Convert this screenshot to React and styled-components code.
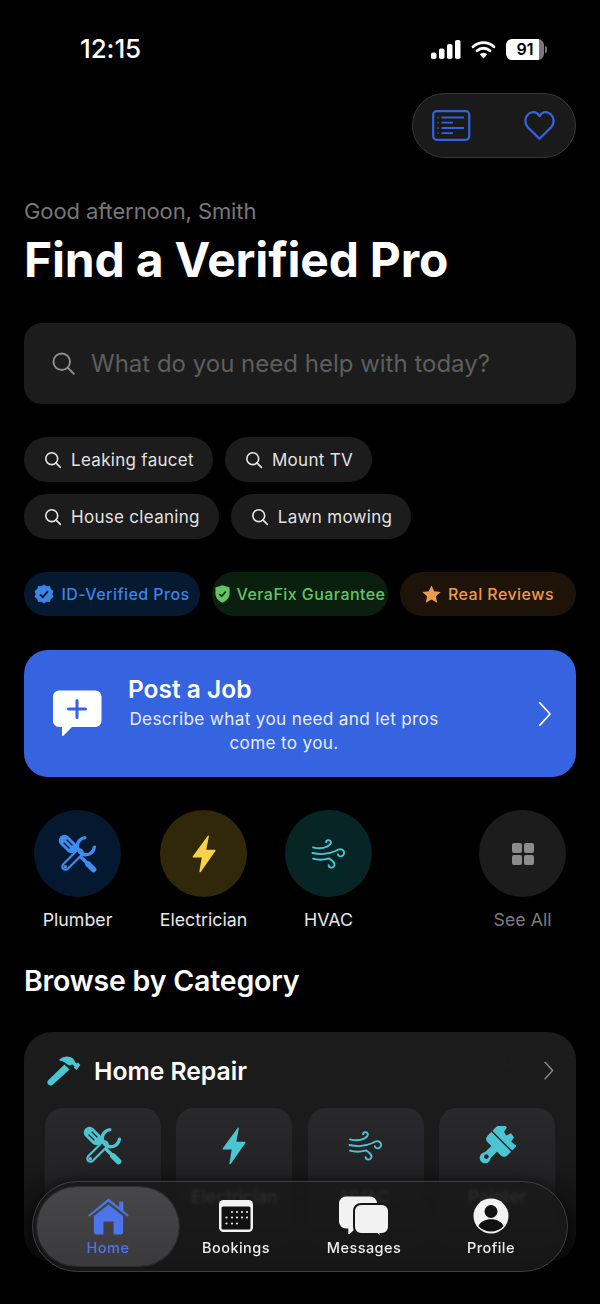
import React from "react";
import styled, { createGlobalStyle } from "styled-components";

const Global = createGlobalStyle`
  html, body { margin: 0; padding: 0; background: #000; }
  body { font-family: Inter, "Liberation Sans", sans-serif; color: #fff; }
  * { box-sizing: border-box; }
`;

const Page = styled.div`
  position: relative;
  width: 600px;
  height: 1304px;
  overflow: hidden;
  background: #000;
  padding: 0 24px;
`;

const StatusBar = styled.div`
  height: 93px;
  padding: 34px 29px 0 56px;
  display: flex;
  justify-content: space-between;
  align-items: flex-start;
`;
const Time = styled.div`
  font-size: 26px;
  line-height: 30px;
  font-weight: 500;
  letter-spacing: -0.1px;
`;
const StatusIcons = styled.div`
  display: flex;
  align-items: center;
  gap: 10px;
  height: 30px;
`;
const BatteryWrap = styled.div`
  display: flex;
  align-items: center;
  gap: 1px;
`;
const Battery = styled.div`
  width: 38px;
  height: 21px;
  border-radius: 6px;
  background: linear-gradient(90deg, #fff 88%, #777 88%);
  color: #000;
  font-size: 16px;
  font-weight: 600;
  display: flex;
  align-items: center;
  justify-content: center;
`;
const BatteryCap = styled.div`
  width: 2px;
  height: 7px;
  border-radius: 0 2px 2px 0;
  background: #777;
`;

const ActionRow = styled.div`
  display: flex;
  justify-content: flex-end;
`;
const ActionPill = styled.div`
  width: 164px;
  height: 65px;
  border-radius: 33px;
  background: #1a1a1a;
  border: 1px solid #383838;
  display: flex;
  align-items: center;
  justify-content: space-between;
  padding: 0 20px 0 19px;
`;

const Greeting = styled.div`
  margin-top: 40px;
  font-size: 22px;
  line-height: 26px;
  color: #777;
  letter-spacing: -0.1px;
`;
const Title = styled.h1`
  margin: 7px 0 0;
  font-size: 48px;
  line-height: 58px;
  font-weight: 700;
  letter-spacing: -0.2px;
`;

const SearchBar = styled.div`
  margin-top: 34px;
  height: 81px;
  border-radius: 18px;
  background: #1c1c1d;
  display: flex;
  align-items: center;
  padding: 0 27px;
  gap: 15px;
`;
const Placeholder = styled.span`
  font-size: 24px;
  color: #5e5e5e;
`;

const Chips = styled.div`
  margin-top: 33px;
  display: flex;
  flex-wrap: wrap;
  gap: 12px;
  width: 440px;
`;
const Chip = styled.div`
  height: 45px;
  border-radius: 23px;
  background: #1c1c1d;
  display: flex;
  align-items: center;
  gap: 9px;
  padding: 0 19px 0 20px;
  font-size: 17px;
  letter-spacing: 0.3px;
  color: #e2e2e2;
`;

const Badges = styled.div`
  margin-top: 33px;
  display: flex;
  justify-content: space-between;
`;
const Badge = styled.div`
  width: 176px;
  height: 44px;
  border-radius: 22px;
  background: ${(p) => p.$bg};
  color: ${(p) => p.$fg};
  display: flex;
  align-items: center;
  justify-content: center;
  gap: 7px;
  font-size: 16px;
  font-weight: 500;
  letter-spacing: 0.45px;
  white-space: nowrap;
`;

const PostCard = styled.div`
  margin-top: 34px;
  height: 127px;
  border-radius: 24px;
  background: #3663e0;
  display: flex;
  align-items: center;
  padding: 0 24px 0 28px;
`;
const PostBody = styled.div`
  width: 312px;
  margin-left: 26px;
`;
const PostTitle = styled.div`
  font-size: 24.5px;
  line-height: 32px;
  font-weight: 600;
`;
const PostText = styled.div`
  margin-top: 2px;
  font-size: 17.2px;
  line-height: 24px;
  letter-spacing: 0.32px;
  color: #e6ecfc;
  text-align: center;
`;
const PostArrow = styled.div`
  margin-left: auto;
  display: flex;
`;

const Quick = styled.div`
  margin-top: 33px;
  display: grid;
  grid-template-columns: 126px 125px 1fr 87px;
  padding: 0 10px;
`;
const QuickItem = styled.div`
  width: 87px;
  display: flex;
  flex-direction: column;
  align-items: center;
`;
const QuickCircle = styled.div`
  width: 87px;
  height: 87px;
  border-radius: 50%;
  background: ${(p) => p.$bg};
  display: flex;
  align-items: center;
  justify-content: center;
`;
const QuickLabel = styled.div`
  margin-top: 12px;
  font-size: 17.8px;
  line-height: 21px;
  white-space: nowrap;
  color: ${(p) => (p.$muted ? "#7b7b7b" : "#e8e8e8")};
`;

const SectionTitle = styled.h2`
  margin: 33px 0 0;
  font-size: 28.5px;
  line-height: 36px;
  font-weight: 600;
  letter-spacing: -0.2px;
`;

const CategoryCard = styled.div`
  margin-top: 33px;
  height: 230px;
  border-radius: 28px;
  background: linear-gradient(180deg, #1c1c1d 0%, #1a1a1b 55%, #0a0a0a 100%);
  padding: 0 21px;
`;
const CategoryHeader = styled.div`
  height: 76px;
  display: flex;
  align-items: center;
  gap: 13px;
  padding: 1px 1px 0 2px;
`;
const CategoryName = styled.div`
  font-size: 24.7px;
  font-weight: 600;
  flex: 1;
`;
const TileGrid = styled.div`
  display: grid;
  grid-template-columns: repeat(4, 116px);
  justify-content: space-between;
`;
const Tile = styled.div`
  height: 140px;
  border-radius: 18px;
  background: linear-gradient(180deg, #29292b 0%, #222224 50%, #0e0e0e 100%);
  display: flex;
  flex-direction: column;
  align-items: center;
  padding-top: 18px;
`;
const TileIcon = styled.div`
  height: 40px;
  display: flex;
  align-items: center;
  justify-content: center;
`;
const TileLabel = styled.div`
  margin-top: 20px;
  font-size: 17.5px;
  line-height: 21px;
  color: #a8a8a8;
`;

const TabBar = styled.nav`
  position: absolute;
  left: 32px;
  top: 1181px;
  width: 536px;
  height: 91px;
  border-radius: 46px;
  background: rgba(26, 26, 27, 0.86);
  backdrop-filter: blur(1.5px);
  border: 1px solid #3e3e3e;
  box-shadow: 0 0 14px rgba(0, 0, 0, 0.6);
  display: grid;
  grid-template-columns: 142px 114px 142px 112px;
  align-items: center;
  padding: 5px 0 5px 4px;
`;
const Tab = styled.div`
  height: 79px;
  border-radius: 40px;
  display: flex;
  flex-direction: column;
  align-items: center;
  justify-content: flex-end;
  padding-bottom: 9px;
  font-size: 14.5px;
  line-height: 18px;
  font-weight: 500;
  letter-spacing: 0.45px;
  color: ${(p) => (p.$active ? "#4d75ea" : "#efefef")};
  background: ${(p) => (p.$active ? "linear-gradient(180deg,#474749 0%,#3a3a3c 100%)" : "transparent")};
  box-shadow: ${(p) => (p.$active ? "0 0 0 1px #2c2c2c" : "none")};
`;
const TabIcon = styled.div`
  height: 42px;
  display: flex;
  align-items: center;
  justify-content: center;
  margin-bottom: 2px;
`;

const Search = ({ size = 20, color = "#e6e6e6", sw = 1.8 }) => (
  <svg width={size} height={size} viewBox="0 0 20 20" fill="none" stroke={color} strokeWidth={sw} strokeLinecap="round">
    <circle cx="8.6" cy="8.6" r="6.6" />
    <path d="M13.5 13.5 18.2 18.2" />
  </svg>
);

const Tools = ({ color, bg }) => (
  <svg width="40" height="40" viewBox="0 0 40 40" fill="none">
    <path d="M6.5 6.5 13.5 13.5" stroke={color} strokeWidth="11.5" strokeLinecap="round" />
    <path d="M6 9 11 14M9 6 14 11" stroke={bg} strokeWidth="1.4" strokeLinecap="round" />
    <path d="M15 15 31 31" stroke={color} strokeWidth="3.6" />
    <path d="M30 30 35.5 35.5" stroke={color} strokeWidth="5.8" strokeLinecap="round" />
    <path d="M21.5 18.5 7.5 32.5" stroke={color} strokeWidth="8.6" strokeLinecap="round" />
    <path d="M21.5 18.5 7.5 32.5" stroke={bg} strokeWidth="4.4" strokeLinecap="round" />
    <path d="M26.8 3.6 A8.6 8.6 0 1 0 36.4 13.2" stroke={color} strokeWidth="3.4" strokeLinecap="round" />
    <circle cx="7.3" cy="32.7" r="1.7" fill={color} />
  </svg>
);

const Bolt = ({ color, w = 24, h = 38 }) => (
  <svg width={w} height={h} viewBox="0 0 24 38">
    <path d="M15.8.8.8 21.2c-.4.6 0 1.3.7 1.3h8.2L7.4 36.4c-.1.8.8 1.2 1.3.6L23.4 16c.4-.6 0-1.3-.7-1.3h-8.4L16.9 1.3c.1-.7-.7-1-1.1-.5Z" fill={color} />
  </svg>
);

const Wind = ({ color, w = 35, h = 30 }) => (
  <svg width={w} height={h} viewBox="0 0 34 30" fill="none" stroke={color} strokeWidth="1.9" strokeLinecap="round">
    <path d="M1.5 8.4C6 9.6 11 9.8 15.6 7.6C18 6.4 19.4 5.2 19.4 3.6C19.4 2 18 1 16.6 1.2C15.4 1.4 14.6 2.2 14.6 3.2" />
    <path d="M1 14C8 15.6 17 15.4 24 12C25.6 11 27 10 29 10.2C31 10.4 32.8 12 32.6 14.2C32.4 16.4 30.2 17.8 28.2 17.2C27 16.8 26.4 16 26.4 15.2" />
    <path d="M1.5 19.6C6 21 12 21 17.6 19.4C20 21.2 22.6 22.6 23 25C23.3 27.2 21.6 28.8 19.6 28.6C18.2 28.4 17.2 27.4 17.2 26.2" />
  </svg>
);

const Grid4 = () => (
  <svg width="24" height="24" viewBox="0 0 24 24" fill="#8c8c8c">
    <rect x="1" y="1" width="10" height="10" rx="2" />
    <rect x="13" y="1" width="10" height="10" rx="2" />
    <rect x="1" y="13" width="10" height="10" rx="2" />
    <rect x="13" y="13" width="10" height="10" rx="2" />
  </svg>
);

const Brush = ({ color, bg }) => (
  <svg width="38" height="40" viewBox="0 0 38 40" fill="none">
    <g transform="rotate(45 19 20) translate(0 -1)">
      <path d="M5 13.5 V3 Q5 1 7 1 H13 L14 6 L18 7 L20 2 L25 3 L26 8 L33 7 V13.5 Z" fill={color} />
      <path d="M5 15 H33 V20 Q33 25 28 25 H23 V34 A5.5 5.5 0 1 1 15 34 V25 H10 Q5 25 5 20 Z" fill={color} />
      <circle cx="19" cy="36" r="2.3" fill={bg} />
    </g>
  </svg>
);

const Hammer = ({ color }) => (
  <svg width="34" height="30" viewBox="0 0 34 30" fill="none">
    <path d="M12.4 3.6Q17-.6 23 1Q27 2.2 28 6L29.6 7.6L31 6.4L33.4 9L29.4 14L26.8 11.6L27.6 10.4L25.4 8.6L22.6 9.600L20.4 8.6Q17.6 5.2 12.4 4.4Z" fill={color} />
    <path d="M17.4 8.4 22.6 13.400 5.400 29Q3 30.400 1.200 28.600Q-.4 26.600 1 24.400Z" fill={color} />
  </svg>
);

const Chevron = ({ w = 16, h = 28, color = "#fff", sw = 1.8 }) => (
  <svg width={w} height={h} viewBox="0 0 16 28" fill="none" stroke={color} strokeWidth={sw} strokeLinecap="round" strokeLinejoin="round">
    <path d="M3 2 14 14 3 26" />
  </svg>
);

const TEAL = "#4cc5d3";
const TILE = "#27272a";

export default function App() {
  return (
    <>
      <Global />
      <Page>
        <StatusBar>
          <Time>12:15</Time>
          <StatusIcons>
            <svg width="30" height="19" viewBox="0 0 30 19" fill="#fff">
              <rect x="0" y="12.5" width="5.5" height="6.5" rx="1.8" />
              <rect x="8" y="8.5" width="5.5" height="10.5" rx="1.8" />
              <rect x="16" y="4" width="5.5" height="15" rx="1.8" />
              <rect x="24" y="0" width="5.5" height="19" rx="1.8" />
            </svg>
            <svg width="25" height="19" viewBox="0 0 23 18" fill="none">
              <path d="M1.6 6.4A14.4 14.4 0 0 1 21.4 6.4" stroke="#fff" strokeWidth="2.7" strokeLinecap="round" />
              <path d="M5.4 10.2A9 9 0 0 1 17.6 10.2" stroke="#fff" strokeWidth="2.7" strokeLinecap="round" />
              <path d="M11.5 17.6 8 13.4A5 5 0 0 1 15 13.4Z" fill="#fff" />
            </svg>
            <BatteryWrap>
              <Battery>91</Battery>
              <BatteryCap />
            </BatteryWrap>
          </StatusIcons>
        </StatusBar>

        <ActionRow>
          <ActionPill>
            <svg width="39" height="31" viewBox="0 0 39 31" fill="none" stroke="#3563dc">
              <rect x="1.2" y="1.2" width="36" height="28.6" rx="3.5" strokeWidth="2.2" />
              <path d="M9.5 7.5H32M9.5 12.7H21M9.5 18H32M9.5 23.2H21" strokeWidth="1.8" />
              <path d="M5.5 7.5H6.5M5.5 12.7H6.5M5.5 18H6.5M5.5 23.2H6.5" strokeWidth="1.8" />
            </svg>
            <svg width="31" height="31" viewBox="0 0 31 30" fill="none" stroke="#3563dc" strokeWidth="2.3" strokeLinejoin="round">
              <path d="M15.5 28.2 4 17C.4 13 .6 7.4 4 4 7.6.4 13 1 15.5 5.6 18 1 23.4.4 27 4c3.4 3.4 3.6 9 0 13Z" />
            </svg>
          </ActionPill>
        </ActionRow>

        <Greeting>Good afternoon, Smith</Greeting>
        <Title>Find a Verified Pro</Title>

        <SearchBar>
          <Search size={25} color="#8d8d8d" sw={1.6} />
          <Placeholder>What do you need help with today?</Placeholder>
        </SearchBar>

        <Chips>
          {["Leaking faucet", "Mount TV", "House cleaning", "Lawn mowing"].map((t) => (
            <Chip key={t}>
              <Search size={18} />
              {t}
            </Chip>
          ))}
        </Chips>

        <Badges>
          <Badge $bg="#051a30" $fg="#3d84e6">
            <svg width="20" height="20" viewBox="0 0 20 20">
              <path d="M10 .4 12.6 2.2 15.8 2 16.8 5 19.4 7 18.4 10 19.4 13 16.8 15 15.8 18 12.6 17.8 10 19.6 7.4 17.8 4.2 18 3.2 15 .6 13 1.6 10 .6 7 3.2 5 4.2 2 7.4 2.2Z" fill="#3d84e6" />
              <path d="M6 10.4 8.8 13.2 14 7.2" stroke="#06182c" strokeWidth="1.8" fill="none" />
            </svg>
            ID-Verified Pros
          </Badge>
          <Badge $bg="#0b1f0f" $fg="#63c465">
            <svg width="15" height="18" viewBox="0 0 15 18">
              <path d="M7.5.3 14.6 2.6V8.6C14.6 13 11.6 16 7.5 17.700 3.4 16 .4 13 .4 8.6V2.6Z" fill="#63c465" />
              <path d="M4.3 9 6.6 11.4 10.8 6.4" stroke="#0b1f0f" strokeWidth="1.6" fill="none" />
            </svg>
            VeraFix Guarantee
          </Badge>
          <Badge $bg="#1e1309" $fg="#ec9a4c">
            <svg width="19" height="18" viewBox="0 0 19 18">
              <path d="M9.5.4 12.2 6.3 18.7 7 13.9 11.3 15.2 17.7 9.5 14.5 3.8 17.7 5.1 11.3.3 7 6.8 6.3Z" fill="#ec9a4c" />
            </svg>
            Real Reviews
          </Badge>
        </Badges>

        <PostCard>
          <svg width="50" height="47" viewBox="0 0 50 47">
            <path d="M7 .5h36.5a6 6 0 0 1 6 6v24.5a6 6 0 0 1-6 6H20L11.6 45.6c-.6.7-1.6.3-1.6-.6V37H7a6 6 0 0 1-6-6V6.5a6 6 0 0 1 6-6Z" fill="#fff" />
            <path d="M25 10.5v17M16.5 19h17" stroke="#3663e0" strokeWidth="3" strokeLinecap="round" />
          </svg>
          <PostBody>
            <PostTitle>Post a Job</PostTitle>
            <PostText>Describe what you need and let pros come to you.</PostText>
          </PostBody>
          <PostArrow>
            <Chevron w={15} h={26} color="#fff" sw={1.8} />
          </PostArrow>
        </PostCard>

        <Quick>
          <QuickItem>
            <QuickCircle $bg="#04192f">
              <Tools color="#3f8cf0" bg="#04192f" />
            </QuickCircle>
            <QuickLabel>Plumber</QuickLabel>
          </QuickItem>
          <QuickItem>
            <QuickCircle $bg="#302808">
              <Bolt color="#f6d24a" />
            </QuickCircle>
            <QuickLabel>Electrician</QuickLabel>
          </QuickItem>
          <QuickItem>
            <QuickCircle $bg="#082526">
              <Wind color="#4cc5cf" />
            </QuickCircle>
            <QuickLabel>HVAC</QuickLabel>
          </QuickItem>
          <QuickItem>
            <QuickCircle $bg="#1c1c1d">
              <Grid4 />
            </QuickCircle>
            <QuickLabel $muted>See All</QuickLabel>
          </QuickItem>
        </Quick>

        <SectionTitle>Browse by Category</SectionTitle>

        <CategoryCard>
          <CategoryHeader>
            <Hammer color={TEAL} />
            <CategoryName>Home Repair</CategoryName>
            <Chevron w={11} h={19} color="#8a8a8a" sw={2.2} />
          </CategoryHeader>
          <TileGrid>
            <Tile>
              <TileIcon><Tools color={TEAL} bg={TILE} /></TileIcon>
              <TileLabel>Plumber</TileLabel>
            </Tile>
            <Tile>
              <TileIcon><Bolt color={TEAL} /></TileIcon>
              <TileLabel>Electrician</TileLabel>
            </Tile>
            <Tile>
              <TileIcon><Wind color={TEAL} /></TileIcon>
              <TileLabel>HVAC</TileLabel>
            </Tile>
            <Tile>
              <TileIcon><Brush color={TEAL} bg={TILE} /></TileIcon>
              <TileLabel>Painter</TileLabel>
            </Tile>
          </TileGrid>
        </CategoryCard>

        <TabBar>
          <Tab $active>
            <TabIcon>
              <svg width="41" height="37" viewBox="0 0 42 38" fill="#4d75ea">
                <path d="M21 .6 32 9.4V3.6h4.2v9.2l5 4.4c.8.8.2 2-1 1.6L21 3.8 1.800 18.800c-1.200.4-1.800-.8-1-1.600Z" />
                <path d="M21 6.600 36 18.600V35c0 1.600-1 2.600-2.600 2.600h-7.200V24.200h-10.400V37.600H8.600C7 37.600 6 36.600 6 35V18.600Z" />
              </svg>
            </TabIcon>
            Home
          </Tab>
          <Tab>
            <TabIcon>
              <svg width="34" height="32" viewBox="0 0 34 32">
                <rect x="0" y="0" width="34" height="32" rx="4.5" fill="#f2f2f2" />
                <rect x="2.5" y="6.5" width="29" height="23" rx="1.5" fill="#111" />
                <g fill="#e8e8e8">
                  <circle cx="13" cy="12" r="1.1" /><circle cx="18" cy="12" r="1.1" /><circle cx="23" cy="12" r="1.1" /><circle cx="28" cy="12" r="1.1" />
                  <circle cx="7.5" cy="17.5" r="1.1" /><circle cx="13" cy="17.5" r="1.1" /><circle cx="18" cy="17.5" r="1.1" /><circle cx="23" cy="17.5" r="1.1" /><circle cx="28" cy="17.5" r="1.1" />
                  <circle cx="7.5" cy="23.5" r="1.1" /><circle cx="13" cy="23.5" r="1.1" /><circle cx="18" cy="23.5" r="1.1" />
                </g>
              </svg>
            </TabIcon>
            Bookings
          </Tab>
          <Tab>
            <TabIcon>
              <svg width="50" height="40" viewBox="0 0 50 40">
                <path d="M7 .5h24a7 7 0 0 1 7 7v18a7 7 0 0 1-7 7H16.500l-6 5.500c-.6.5-1.200.2-1.200-.5V32.500H7a7 7 0 0 1-7-7v-18a7 7 0 0 1 7-7Z" fill="#f2f2f2" />
                <path d="M22 8h21a7 7 0 0 1 7 7v16a7 7 0 0 1-7 7h-1.500v2c0 .7-.7 1-1.200.5L38 38H22a7 7 0 0 1-7-7V15a7 7 0 0 1 7-7Z" fill="#f2f2f2" stroke="#161617" strokeWidth="2" />
              </svg>
            </TabIcon>
            Messages
          </Tab>
          <Tab>
            <TabIcon>
              <svg width="36" height="36" viewBox="0 0 36 36">
                <circle cx="18" cy="18" r="17.5" fill="#f2f2f2" />
                <circle cx="18" cy="13.5" r="6.5" fill="#111" />
                <path d="M5.500 28c2-4.600 6.500-6.800 12.500-6.800S28.500 23.400 30.500 28C27.500 31.600 23 33.500 18 33.500S8.500 31.600 5.500 28Z" fill="#111" />
              </svg>
            </TabIcon>
            Profile
          </Tab>
        </TabBar>
      </Page>
    </>
  );
}
